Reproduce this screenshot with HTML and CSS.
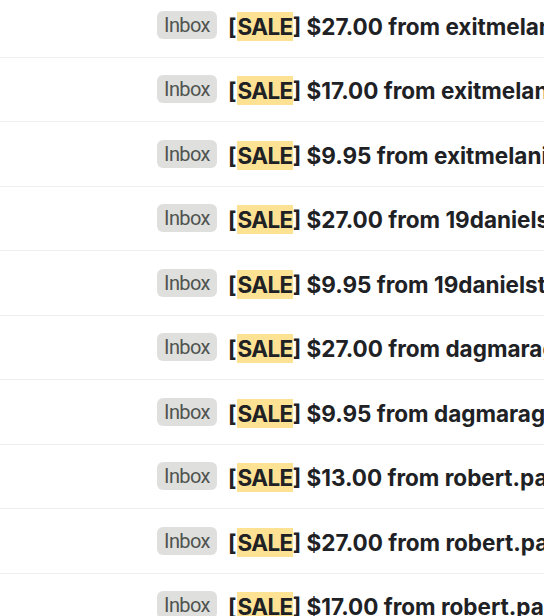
FILE: index.html
```html
<!DOCTYPE html>
<html>
<head>
<meta charset="utf-8">
<link rel="stylesheet" href="styles.css">
</head>
<body>
<div class="list">
  <div class="row"><span class="badge">Inbox</span><span class="subject">[<mark>SALE</mark>] $27.00 from exitmelanie@gmail.com</span></div>
  <div class="row"><span class="badge">Inbox</span><span class="subject">[<mark>SALE</mark>] $17.00 from exitmelanie@gmail.com</span></div>
  <div class="row"><span class="badge">Inbox</span><span class="subject">[<mark>SALE</mark>] $9.95 from exitmelanie@gmail.com</span></div>
  <div class="row"><span class="badge">Inbox</span><span class="subject">[<mark>SALE</mark>] $27.00 from 19danielstone@gmail.com</span></div>
  <div class="row"><span class="badge">Inbox</span><span class="subject">[<mark>SALE</mark>] $9.95 from 19danielstone@gmail.com</span></div>
  <div class="row"><span class="badge">Inbox</span><span class="subject">[<mark>SALE</mark>] $27.00 from dagmaragrey@gmail.com</span></div>
  <div class="row"><span class="badge">Inbox</span><span class="subject">[<mark>SALE</mark>] $9.95 from dagmaragrey@gmail.com</span></div>
  <div class="row"><span class="badge">Inbox</span><span class="subject">[<mark>SALE</mark>] $13.00 from robert.parker@gmail.com</span></div>
  <div class="row"><span class="badge">Inbox</span><span class="subject">[<mark>SALE</mark>] $27.00 from robert.parker@gmail.com</span></div>
  <div class="row"><span class="badge">Inbox</span><span class="subject">[<mark>SALE</mark>] $17.00 from robert.parker@gmail.com</span></div>
</div>
</body>
</html>
```
FILE: styles.css
```css
html, body {
  margin: 0;
  padding: 0;
  background: #ffffff;
  overflow: hidden;
}
.list {
  margin-top: -7px;
  width: 544px;
  overflow: hidden;
}
.row {
  box-sizing: border-box;
  height: 64.5px;
  border-bottom: 1px solid #eeeeee;
  display: flex;
  align-items: center;
  padding-left: 157px;
  white-space: nowrap;
  overflow: hidden;
}
.badge {
  flex: none;
  box-sizing: border-box;
  width: 60px;
  height: 28px;
  border-radius: 6px;
  background: #dfe0dd;
  color: #505350;
  font-family: Roboto, "Liberation Sans", sans-serif;
  font-size: 20px;
  line-height: 28px;
  text-align: center;
  letter-spacing: -0.6px;
}
.subject {
  margin-left: 11px;
  margin-top: 3px;
  font-family: Inter, "Open Sans", sans-serif;
  font-weight: 700;
  font-size: 22.5px;
  color: #202124;
}
mark {
  background: #fde293;
  color: inherit;
  margin-left: 1px;
  padding: 1px 0 1px;
  letter-spacing: -0.6px;
}
```
